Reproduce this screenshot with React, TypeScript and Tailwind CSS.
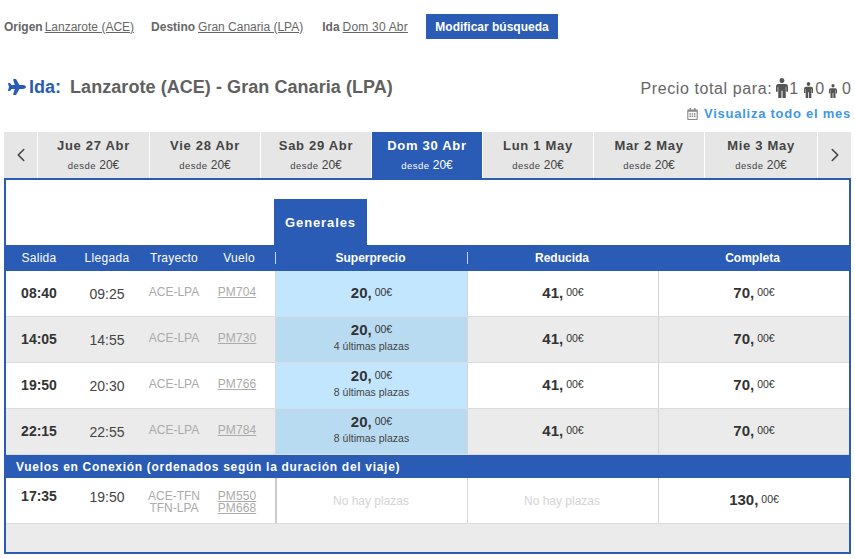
import { ChevronLeft, ChevronRight } from "lucide-react";
import { FaPlane, FaRegCalendarAlt } from "react-icons/fa";

const GRID = "grid grid-cols-[66px_70px_64px_69px_192px_191px_191px]";

const days = [
  { label: "Jue 27 Abr", w: "w-[111px]" },
  { label: "Vie 28 Abr", w: "w-[110px]" },
  { label: "Sab 29 Abr", w: "w-[110px]" },
  { label: "Dom 30 Abr", w: "w-[110px]", active: true },
  { label: "Lun 1 May", w: "w-[110px]" },
  { label: "Mar 2 May", w: "w-[110px]" },
  { label: "Mie 3 May", w: "w-[112px]" },
];

const flights = [
  { dep: "08:40", arr: "09:25", code: "PM704", note: "", alt: false },
  { dep: "14:05", arr: "14:55", code: "PM730", note: "4 últimas plazas", alt: true },
  { dep: "19:50", arr: "20:30", code: "PM766", note: "8 últimas plazas", alt: false },
  { dep: "22:15", arr: "22:55", code: "PM784", note: "8 últimas plazas", alt: true },
];

function Person({ className }: { className: string }) {
  return (
    <svg viewBox="0 0 14 22" preserveAspectRatio="none" className={className} fill="currentColor" aria-hidden>
      <circle cx="7" cy="2.8" r="2.8" />
      <path d="M3 6.5h8a3 3 0 0 1 3 3V15h-2V9.5h-.6V22H7.6v-8H6.4v8H2.6V9.5H2V15H0V9.5a3 3 0 0 1 3-3z" />
    </svg>
  );
}

function Price({ value }: { value: string }) {
  return (
    <span className="text-[#333333]">
      <span className="text-[15px] font-bold">{value},</span>
      <span className="ml-[3px] align-[2px] text-[10.5px]">00€</span>
    </span>
  );
}

function FlightRow({ dep, arr, code, note, alt }: (typeof flights)[number]) {
  return (
    <div className={`${GRID} h-[46px] border-b border-[#d9dde3] ${alt ? "bg-[#ebebeb]" : "bg-white"}`}>
      <div className="flex items-center justify-center text-[14px] font-bold text-[#333333]">{dep}</div>
      <div className="flex items-center justify-center pt-[1px] text-[14px] text-[#444444]">{arr}</div>
      <div className="flex items-center justify-center pb-[3px] text-[12px] text-[#aaaaaa]">ACE-LPA</div>
      <div className="flex items-center justify-center pb-[3px] pr-[7px] text-[12px] tracking-[0.1px] text-[#aaaaaa] underline">{code}</div>
      <div className={`flex flex-col items-center justify-center border-l border-[#d5d9dd] ${note ? "pb-[6px]" : "pb-[2px]"} ${alt ? "bg-[#b9dbf2]" : "bg-[#c3e6ff]"}`}>
        <div className={note ? "leading-[19px]" : ""}>
          <Price value="20" />
        </div>
        {note && <div className="text-[10.5px] leading-[14px] text-[#444444]">{note}</div>}
      </div>
      <div className="flex items-center justify-center border-l border-[#d5d5d5] pb-[2px]">
        <Price value="41" />
      </div>
      <div className="flex items-center justify-center border-l border-[#d5d5d5] pb-[2px]">
        <Price value="70" />
      </div>
    </div>
  );
}

export default function App() {
  return (
    <div className="h-[559px] w-[855px] overflow-hidden bg-white pl-[4px] font-['Liberation_Sans',Arial,sans-serif]">
      {/* resumen de la busqueda */}
      <div className="flex h-[39px] items-end text-[12px] text-[#666666]">
        <div className="flex h-[25px] w-[422px] items-center">
          <b>Origen</b>
          <span className="ml-[2px] underline">Lanzarote (ACE)</span>
          <b className="ml-[17px]">Destino</b>
          <span className="ml-[3px] underline">Gran Canaria (LPA)</span>
          <b className="ml-[19px]">Ida</b>
          <span className="ml-[3px] tracking-[0.2px] underline">Dom 30 Abr</span>
        </div>
        <button type="button" className="h-[25px] w-[132px] bg-[#2a5bb5] text-[12px] font-bold text-white">
          Modificar búsqueda
        </button>
      </div>

      <div className="flex h-[93px] w-[847px] justify-between">
        <div className="flex h-[18px] items-center pl-[4px] pt-[48px] text-[18px] font-bold">
          <FaPlane className="h-[18px] w-[18px] text-[#2a5bb5]" />
          <span className="ml-[3px] text-[#2a5bb5]">Ida:</span>
          <span className="ml-[9px] tracking-[0.06px] text-[#606060]">Lanzarote (ACE) - Gran Canaria (LPA)</span>
        </div>
        <div className="flex flex-col items-end pt-[38px]">
          <div className="flex h-[24px] items-center text-[16px] text-[#666666]">
            <span className="tracking-[0.6px]">Precio total para:</span>
            <Person className="mb-[2px] ml-[4px] h-[20px] w-[12px] text-[#555555]" />
            <span className="ml-[1px]">1</span>
            <Person className="ml-[6px] mt-[2px] h-[16px] w-[9px] text-[#555555]" />
            <span className="ml-[2px]">0</span>
            <Person className="ml-[5px] mt-[4px] h-[14px] w-[8px] text-[#555555]" />
            <span className="ml-[5px]">0</span>
          </div>
          <div className="mt-[3px] flex items-center text-[13px] font-bold tracking-[0.75px] text-[#3f97e8]">
            <FaRegCalendarAlt className="mr-[6px] h-[12px] w-[11px] text-[#888888]" />
            Visualiza todo el mes
          </div>
        </div>
      </div>

      {/* pestañas de fechas */}
      <div className="flex h-[46px] w-[847px] gap-[1px] bg-white">
        <div className="flex w-[33px] items-center justify-center bg-[#e6e6e6]">
          <ChevronLeft className="h-[22px] w-[22px] text-[#444444]" strokeWidth={1.75} />
        </div>
        {days.map((day) => (
          <div
            key={day.label}
            className={`${day.w} pt-[6px] text-center ${day.active ? "bg-[#2a5bb5] text-white" : "bg-[#e6e6e6] text-[#444444]"}`}
          >
            <div className="text-[13px] font-bold leading-[16px] tracking-[0.7px]">{day.label}</div>
            <div className="mt-[4px] text-[9.5px] leading-[14px] tracking-[0.5px]">
              desde <span className="text-[12px] tracking-normal">20€</span>
            </div>
          </div>
        ))}
        <div className="flex flex-1 items-center justify-center bg-[#e6e6e6]">
          <ChevronRight className="h-[22px] w-[22px] text-[#444444]" strokeWidth={1.75} />
        </div>
      </div>

      <div className="h-[376px] w-[847px] border-2 border-[#2a5bb5] bg-white">
        <div className="h-[65px] pl-[268px] pt-[19px]">
          <div className="flex h-[46px] w-[93px] items-start justify-center bg-[#2a5bb5] pt-[14px] text-[13px] font-bold tracking-[0.9px] text-white">
            Generales
          </div>
        </div>

        <div className={`${GRID} h-[26px] items-center bg-[#2a5bb5] text-center text-[12px] text-white`}>
          <div className="tracking-[0.3px]">Salida</div>
          <div className="tracking-[0.3px]">Llegada</div>
          <div className="tracking-[0.2px]">Trayecto</div>
          <div className="pr-[3px] tracking-[0.3px]">Vuelo</div>
          <div className="border-l border-[#c8d6ee] pr-[2px] font-bold leading-[12px]">Superprecio</div>
          <div className="border-l border-[#c8d6ee] pr-[2px] font-bold leading-[12px]">Reducida</div>
          <div className="border-l border-[#2a5bb5] pr-[3px] font-bold leading-[12px]">Completa</div>
        </div>

        {flights.map((flight) => (
          <FlightRow key={flight.dep} {...flight} />
        ))}

        <div className="flex h-[23px] items-center bg-[#2a5bb5] pl-[10px] text-[12px] font-bold tracking-[0.7px] text-white">
          Vuelos en Conexión (ordenados según la duración del viaje)
        </div>

        <div className={`${GRID} h-[46px] border-b border-[#d9dde3] bg-white`}>
          <div className="flex items-center justify-center pb-[8px] text-[14px] font-bold text-[#333333]">17:35</div>
          <div className="flex items-center justify-center pb-[7px] text-[14px] text-[#444444]">19:50</div>
          <div className="flex flex-col items-center justify-center pt-[3px] text-[12px] leading-[12px] text-[#aaaaaa]">
            <span>ACE-TFN</span>
            <span>TFN-LPA</span>
          </div>
          <div className="flex flex-col items-center justify-center pr-[7px] pt-[3px] text-[12px] leading-[12px] tracking-[0.1px] text-[#aaaaaa] underline">
            <span>PM550</span>
            <span>PM668</span>
          </div>
          <div className="flex items-center justify-center border-l-2 border-[#cccccc] pr-[2px] text-[12px] text-[#d4d4d4]">No hay plazas</div>
          <div className="flex items-center justify-center border-l border-[#d5d5d5] pr-[2px] text-[12px] text-[#d4d4d4]">No hay plazas</div>
          <div className="flex items-center justify-center border-l border-[#d5d5d5] pb-[2px]">
            <Price value="130" />
          </div>
        </div>

        <div className="h-[28px] bg-[#ebebeb]" />
      </div>
    </div>
  );
}
